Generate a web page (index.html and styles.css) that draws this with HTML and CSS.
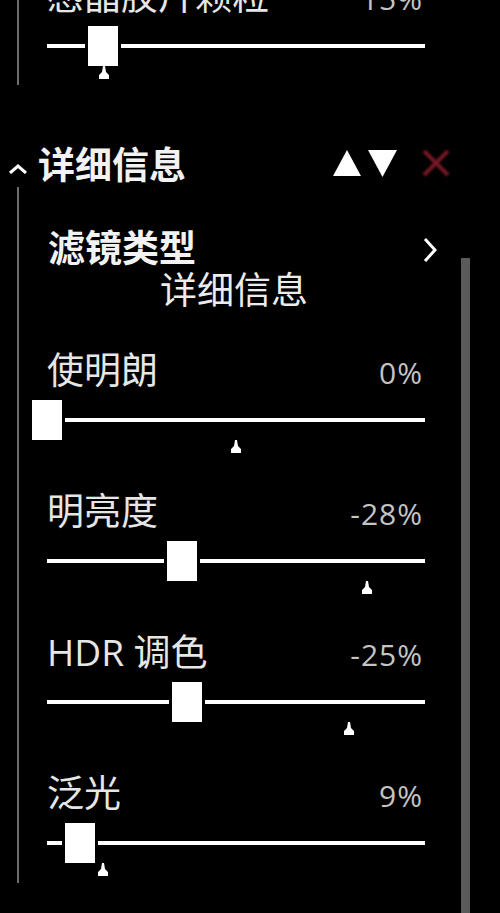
FILE: index.html
```html
<!DOCTYPE html>
<html lang="zh-CN">
<head>
<meta charset="utf-8">
<link rel="stylesheet" href="styles.css">
</head>
<body>
<div class="panel">
  <div class="group group-top">
    <div class="item">
      <div class="label-row"><span class="label">感晶胶片颗粒</span><span class="value">15%</span></div>
      <div class="slider">
        <div class="track">
          <div class="thumb" style="left:41px"></div>
          <svg class="marker" style="left:52px" width="10" height="13" viewBox="0 0 10 13"><polygon points="4,0 6,0 7,6 10,9 10,13 0,13 0,9 3,6" fill="#fff"/></svg>
        </div>
      </div>
    </div>
  </div>

  <div class="heading">
    <svg class="caret" width="20" height="10" viewBox="0 0 20 10"><polyline points="2,9 10,2 18,9" fill="none" stroke="#fff" stroke-width="3"/></svg>
    <span class="heading-text">详细信息</span>
    <div class="heading-tools">
      <svg width="28" height="26" viewBox="0 0 28 26"><polygon points="14,0 28,26 0,26" fill="#fff"/></svg>
      <svg width="29" height="27" viewBox="0 0 29 27"><polygon points="0,0 29,0 14.5,27" fill="#fff"/></svg>
      <svg class="close" width="32" height="30" viewBox="0 0 32 30"><path d="M4 3 L28 27 M28 3 L4 27" stroke="#8a1b2c" stroke-width="4"/></svg>
    </div>
  </div>

  <div class="group group-main">
    <div class="filter">
      <div class="filter-row"><span class="filter-title">滤镜类型</span>
        <svg class="chev" width="14" height="26" viewBox="0 0 14 26"><polyline points="2,2 12,13 2,24" fill="none" stroke="#fff" stroke-width="3"/></svg>
      </div>
      <div class="filter-sub">详细信息</div>
    </div>

    <div class="items">
      <div class="item">
        <div class="label-row"><span class="label">使明朗</span><span class="value">0%</span></div>
        <div class="slider"><div class="track">
          <div class="thumb" style="left:-15px"></div>
          <svg class="marker" style="left:184px" width="10" height="13" viewBox="0 0 10 13"><polygon points="4,0 6,0 7,6 10,9 10,13 0,13 0,9 3,6" fill="#fff"/></svg>
        </div></div>
      </div>
      <div class="item">
        <div class="label-row"><span class="label">明亮度</span><span class="value">-28%</span></div>
        <div class="slider"><div class="track">
          <div class="thumb" style="left:120px"></div>
          <svg class="marker" style="left:315px" width="10" height="13" viewBox="0 0 10 13"><polygon points="4,0 6,0 7,6 10,9 10,13 0,13 0,9 3,6" fill="#fff"/></svg>
        </div></div>
      </div>
      <div class="item">
        <div class="label-row"><span class="label">HDR 调色</span><span class="value">-25%</span></div>
        <div class="slider"><div class="track">
          <div class="thumb" style="left:125px"></div>
          <svg class="marker" style="left:297px" width="10" height="13" viewBox="0 0 10 13"><polygon points="4,0 6,0 7,6 10,9 10,13 0,13 0,9 3,6" fill="#fff"/></svg>
        </div></div>
      </div>
      <div class="item">
        <div class="label-row"><span class="label">泛光</span><span class="value">9%</span></div>
        <div class="slider"><div class="track">
          <div class="thumb" style="left:18px"></div>
          <svg class="marker" style="left:51px" width="10" height="13" viewBox="0 0 10 13"><polygon points="4,0 6,0 7,6 10,9 10,13 0,13 0,9 3,6" fill="#fff"/></svg>
        </div></div>
      </div>
    </div>
  </div>

  <div class="scrollbar"></div>
</div>
</body>
</html>
```

FILE: styles.css
```css
html, body {
  margin: 0;
  padding: 0;
  background: #000;
  overflow: hidden;
}
body {
  width: 500px;
  height: 913px;
  font-family: "Open Sans", "Noto Sans CJK SC", sans-serif;
  color: #ececec;
}
.panel {
  position: relative;
  width: 500px;
  height: 913px;
  overflow: hidden;
}
.group {
  margin-left: 17px;
  border-left: 2px solid #6e6e6e;
}
.group-top {
  margin-top: -24px;
  padding-bottom: 7px;
}
.item {
  padding-left: 28px;
  padding-right: 75px;
  height: 102px;
}
.label-row {
  display: flex;
  justify-content: space-between;
  align-items: baseline;
  height: 40px;
  line-height: 40px;
  padding-right: 2px;
}
.label {
  font-size: 37px;
  font-family: "Open Sans", "Noto Sans CJK SC", sans-serif;
  color: #e6e6e6;
}
.value {
  font-size: 30px;
  letter-spacing: 1px;
  color: #c4c4c4;
}
.slider {
  padding-top: 28px;
}
.track {
  position: relative;
  height: 4px;
  background: #fff;
}
.thumb {
  position: absolute;
  top: -18px;
  width: 30px;
  height: 40px;
  background: #fff;
  box-shadow: 0 0 0 3px #000;
}
.marker {
  position: absolute;
  top: 22px;
  display: block;
}
.heading {
  display: flex;
  align-items: center;
  height: 40px;
  padding: 58px 48px 4px 8px;
}
.caret {
  display: block;
  margin-top: 12px;
}
.heading-text {
  margin-left: 10px;
  font-family: "Noto Sans CJK SC", sans-serif;
  font-weight: 700;
  font-size: 37px;
  line-height: 40px;
  color: #f2f2f2;
}
.heading-tools {
  margin-left: auto;
  display: flex;
  align-items: center;
}
.heading-tools svg {
  display: block;
}
.heading-tools svg + svg {
  margin-left: 7px;
}
.heading-tools .close {
  margin-left: 23px;
  filter: blur(1px);
  opacity: 0.85;
}
.group-main {
  padding-bottom: 8px;
}
.filter {
  padding: 39px 63px 0 29px;
  margin-bottom: 42px;
}
.filter-row {
  display: flex;
  justify-content: space-between;
  align-items: center;
  height: 40px;
}
.filter-title {
  font-family: "Noto Sans CJK SC", sans-serif;
  font-weight: 700;
  font-size: 37px;
  line-height: 40px;
  color: #f2f2f2;
}
.chev {
  display: block;
  margin-top: 8px;
}
.filter-sub {
  margin-top: 2px;
  padding-left: 112px;
  font-family: "Noto Sans CJK SC", sans-serif;
  font-size: 37px;
  line-height: 40px;
  color: #ececec;
}
.items {
  display: flex;
  flex-direction: column;
  gap: 39px;
}
.scrollbar {
  position: absolute;
  left: 461px;
  top: 258px;
  width: 9px;
  bottom: 0;
  background: #5a5a5a;
}
```
